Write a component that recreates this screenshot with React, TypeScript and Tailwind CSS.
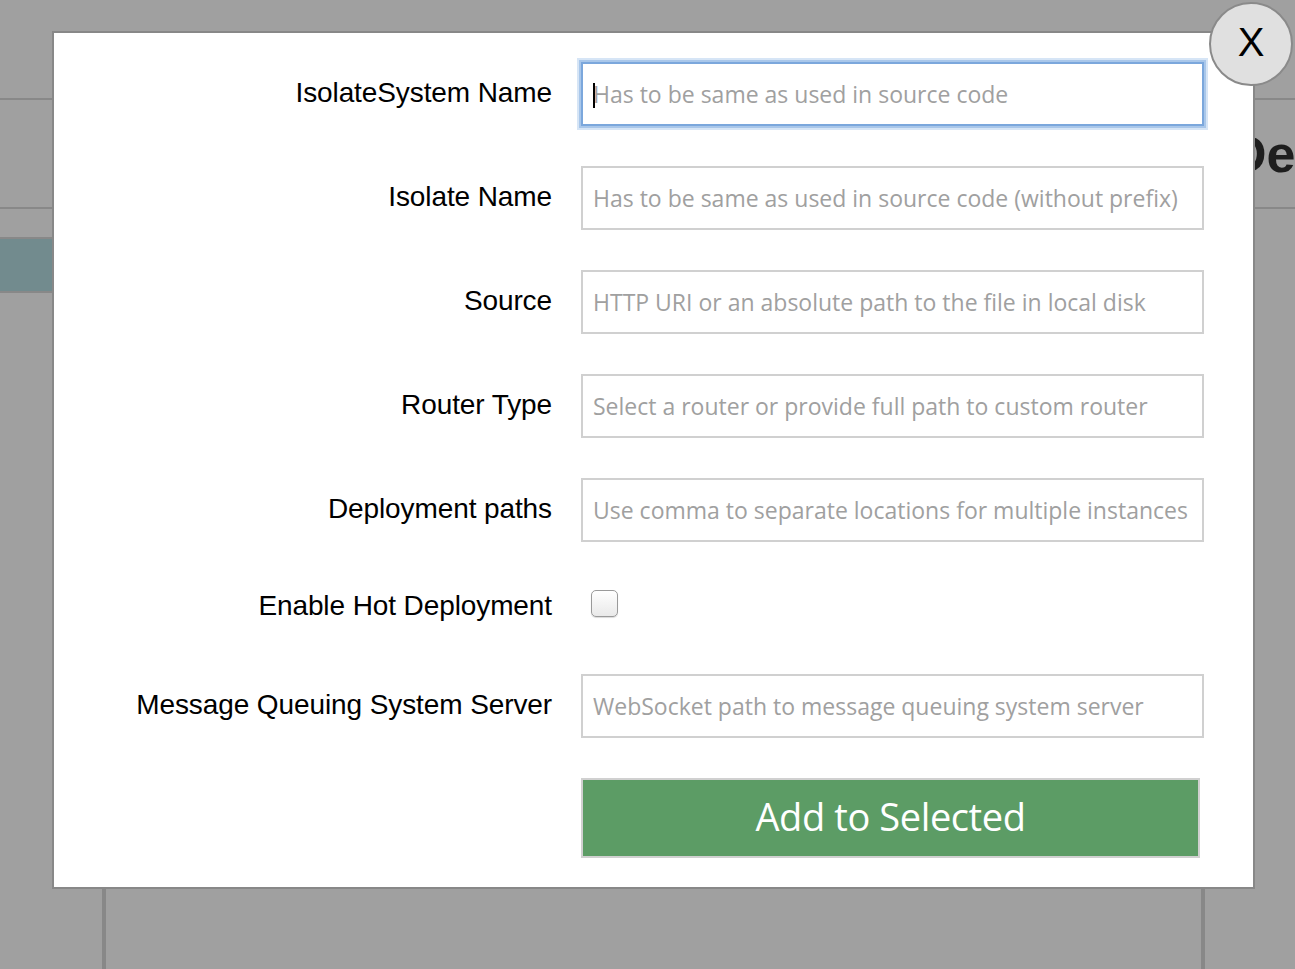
import { useState } from "react";

const fields = [
  { label: "IsolateSystem Name", placeholder: "Has to be same as used in source code", focused: true },
  { label: "Isolate Name", placeholder: "Has to be same as used in source code (without prefix)" },
  { label: "Source", placeholder: "HTTP URI or an absolute path to the file in local disk" },
  { label: "Router Type", placeholder: "Select a router or provide full path to custom router" },
  { label: "Deployment paths", placeholder: "Use comma to separate locations for multiple instances" },
];

function Label({ children, className = "" }: { children: string; className?: string }) {
  return (
    <div className={"w-[498px] shrink-0 text-right text-[28px] tracking-[-0.1px] leading-none text-black " + className}>
      <label>{children}</label>
    </div>
  );
}

function TextInput({ placeholder, focused }: { placeholder: string; focused?: boolean }) {
  return (
    <div className="relative w-[623px]">
      <input
        type="text"
        placeholder={placeholder}
        className={
          "w-full h-[64px] px-[10px] bg-white text-[23px] text-gray-700 placeholder:text-[#a0a0a0] outline-none font-['Open_Sans',sans-serif] border-2 " +
          (focused
            ? "border-[#7ba7dc] shadow-[0_0_0_2px_#a9c7ea,0_0_0_4px_#d6e5f6]"
            : "border-[#d0d0d0]")
        }
      />
      {focused && <span className="absolute left-[12px] top-[21px] w-[2px] h-[25px] bg-black" />}
    </div>
  );
}

export default function App() {
  const [hot, setHot] = useState(false);

  return (
    <div className="relative w-[1295px] h-[969px] overflow-hidden bg-[#a0a0a0] font-['Liberation_Sans',Arial,sans-serif]">
      {/* page behind the dialog */}
      <div className="h-[100px] border-b-2 border-[#888]" />
      <div className="h-[109px] border-b-2 border-[#888] flex items-center pl-[1229px] whitespace-nowrap">
        <h1 className="text-[52px] font-bold text-[#1e1e1e] leading-none">De</h1>
      </div>
      <div className="flex">
        <div className="w-[102px] pt-[28px]">
          <div className="h-[56px] bg-[#728b8e] border-y-2 border-[#888]" />
        </div>
        <div className="mt-[680px] w-[1103px] h-[200px] border-x-4 border-[#888]" />
      </div>

      {/* dialog */}
      <div className="absolute left-[52px] top-[31px] w-[1203px] bg-white border-2 border-[#888] pt-[29px] pb-[29px]">
        <div className="flex flex-col gap-[40px]">
          {fields.map((f) => (
            <div key={f.label} className="flex items-start gap-[29px]">
              <Label className="pt-[17px]">{f.label}</Label>
              <TextInput placeholder={f.placeholder} focused={f.focused} />
            </div>
          ))}

          <div className="h-[52px] flex items-start gap-[29px]">
            <Label className="pt-[10px]">Enable Hot Deployment</Label>
            <div className="pt-[8px] pl-[10px]">
              <input
                type="checkbox"
                checked={hot}
                onChange={(e) => setHot(e.target.checked)}
                className="appearance-none block w-[27px] h-[27px] rounded-[5px] border border-[#9a9a9a] bg-gradient-to-b from-white to-[#e9e9e9] shadow-[0_1px_1px_rgba(0,0,0,0.15)] checked:bg-[#3b82f6]"
              />
            </div>
          </div>

          <div className="flex items-start gap-[29px]">
            <Label className="pt-[17px]">Message Queuing System Server</Label>
            <TextInput placeholder="WebSocket path to message queuing system server" />
          </div>

          <div className="flex gap-[29px]">
            <div className="w-[498px] shrink-0" />
            <button className="w-[619px] h-[80px] pb-[5px] bg-[#5c9c65] border-2 border-[#d0d0d0] text-white text-[38px] tracking-[-0.4px] font-medium font-['Open_Sans',sans-serif] leading-none">
              Add to Selected
            </button>
          </div>
        </div>
      </div>

      <div className="absolute left-[1209px] top-[2px] w-[84px] h-[84px] pb-[5px] rounded-full bg-[#e0e0e0] border-2 border-[#8a8a8a] flex items-center justify-center">
        <span className="text-[40px] leading-none text-black">X</span>
      </div>
    </div>
  );
}
